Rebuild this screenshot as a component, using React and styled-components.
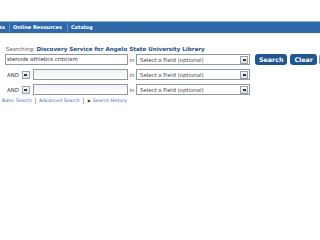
import styled, { createGlobalStyle } from "styled-components";

const GlobalStyle = createGlobalStyle`
  body {
    margin: 0;
    background: #ffffff;
    font-family: "DejaVu Sans", Verdana, sans-serif;
    overflow: hidden;
  }
`;

const Page = styled.div`
  width: 320px;
  height: 240px;
  padding-top: 21px;
  box-sizing: border-box;
  overflow: hidden;
`;

const NavBar = styled.div`
  height: 11px;
  background: #2f69aa;
  border-top: 1px solid #8fb1d9;
  border-bottom: 1px solid #efe9c8;
  display: flex;
  align-items: center;
  overflow: hidden;
`;

const NavList = styled.ul`
  display: flex;
  align-items: center;
  margin: 0;
  padding: 0;
  list-style: none;
`;

const NavItem = styled.li`
  color: #ffffff;
  font-size: 5px;
  font-weight: bold;
  line-height: 9px;
  white-space: nowrap;
  padding: 0 5px 0 ${(p) => (p.$first ? 0 : 3)}px;
  border-left: ${(p) => (p.$first ? "none" : "1px solid #5f8cc2")};
  ${(p) =>
    p.$first &&
    `
    width: 9px;
    box-sizing: border-box;
    display: flex;
    justify-content: flex-end;
    padding-right: 4px;
  `}
`;

const Content = styled.div`
  padding: 11px 0 0 5px;
`;

const Searching = styled.div`
  font-size: 5.4px;
  color: #555;
  height: 8px;
  line-height: 8px;
  padding-left: 1px;
  white-space: nowrap;

  strong {
    color: #1e4f86;
    font-size: 5.6px;
  }
`;

const Rows = styled.div`
  margin-top: 1px;
  display: flex;
  flex-direction: column;
  gap: 4px;
`;

const Row = styled.div`
  display: flex;
  align-items: center;
  height: 11px;
  overflow: hidden;

  & > * {
    flex-shrink: 0;
  }
`;

const BoolBox = styled.div`
  width: 28px;
  display: flex;
  align-items: center;
  gap: 3px;
  font-size: 5.4px;
  color: #444;
  padding-left: 2px;
  box-sizing: border-box;
`;

const ArrowBox = styled.span`
  width: 8px;
  height: 8px;
  border: 1px solid #9aa4b0;
  background: linear-gradient(#fafafa, #dcdcdc);
  display: flex;
  align-items: center;
  justify-content: center;
  box-sizing: border-box;

  &::after {
    content: "";
    width: 3px;
    height: 2px;
    background: #333;
  }
`;

const TextBox = styled.div`
  width: ${(p) => p.$width}px;
  height: 11px;
  border: 1px solid #8e9aa8;
  background: ${(p) => (p.$filled ? "#ffffff" : "linear-gradient(#f2f2f2, #ffffff)")};
  box-sizing: border-box;
  font-size: 5.4px;
  color: #333;
  line-height: 9px;
  padding-left: 1px;
  white-space: nowrap;
`;

const InLabel = styled.span`
  width: 8px;
  text-align: center;
  font-size: 5.4px;
  color: #555;
`;

const Select = styled.div`
  width: 114px;
  height: 11px;
  border: 1px solid #8e9aa8;
  box-sizing: border-box;
  display: flex;
  align-items: center;
  justify-content: space-between;
  padding: 0 1px 0 3px;
  font-size: 5.4px;
  color: #444;
  background: #fff;
  white-space: nowrap;
`;

const Button = styled.span`
  height: 11px;
  padding: 0 4px;
  margin-left: ${(p) => p.$gap}px;
  background: #1f568f;
  border-radius: 3px;
  color: #fff;
  font-size: 6.3px;
  font-weight: bold;
  line-height: 11px;
  white-space: nowrap;
`;

const HelpButton = styled.span`
  width: 12px;
  height: 11px;
  margin-left: 2px;
  background: #6f9fd6;
  border-radius: 3px;
`;

const Links = styled.div`
  display: flex;
  align-items: center;
  margin: 2px 0 0 -6px;
  font-size: 4.7px;
  color: #3a6fb5;
  height: 8px;
  white-space: nowrap;
`;

const LinkItem = styled.span`
  padding: 0 3px;
  border-left: ${(p) => (p.$sep ? "1px solid #aaa" : "none")};
  line-height: 6px;
`;

const Bullet = styled.span`
  color: #333;
  margin: 0 2px 0 1px;
  font-size: 4px;
`;

function QueryRow({ first, text }) {
  return (
    <Row>
      {first ? (
        <TextBox $width={123} $filled>
          {text}
        </TextBox>
      ) : (
        <>
          <BoolBox>
            AND <ArrowBox />
          </BoolBox>
          <TextBox $width={95} />
        </>
      )}
      <InLabel>in</InLabel>
      <Select>
        Select a Field (optional)
        <ArrowBox />
      </Select>
      {first && (
        <>
          <Button $gap={5}>Search</Button>
          <Button $gap={3}>Clear</Button>
          <HelpButton />
        </>
      )}
    </Row>
  );
}

export default function App() {
  return (
    <Page>
      <GlobalStyle />
      <NavBar>
        <NavList>
          <NavItem $first>Links</NavItem>
          <NavItem>Online Resources</NavItem>
          <NavItem>Catalog</NavItem>
        </NavList>
      </NavBar>
      <Content>
        <Searching>
          Searching: <strong>Discovery Service for Angelo State University Library</strong>
        </Searching>
        <Rows>
          <QueryRow first text="steroids athletics criticism" />
          <QueryRow />
          <QueryRow />
        </Rows>
        <Links>
          <LinkItem>Basic Search</LinkItem>
          <LinkItem $sep>Advanced Search</LinkItem>
          <LinkItem $sep>
            <Bullet>▶</Bullet>Search History
          </LinkItem>
        </Links>
      </Content>
    </Page>
  );
}
